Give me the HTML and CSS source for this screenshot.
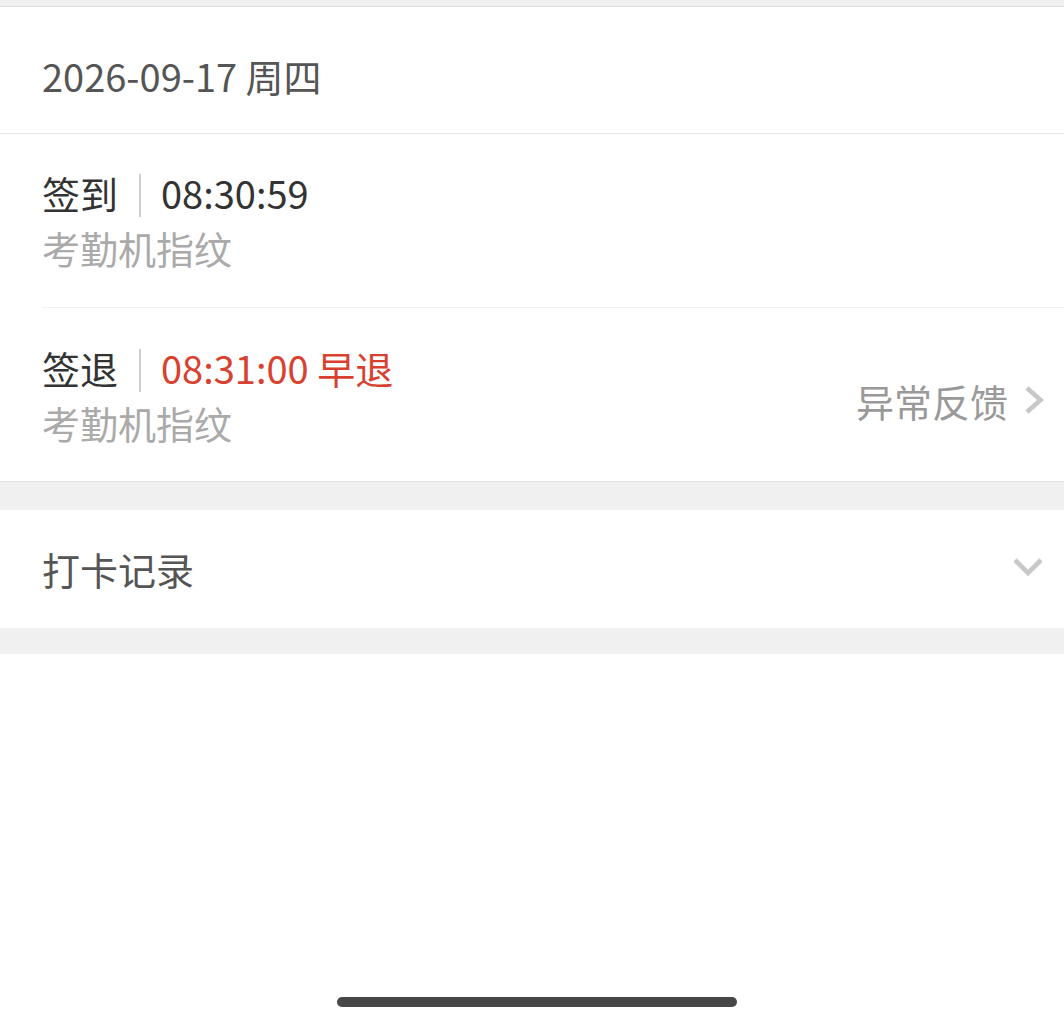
FILE: index.html
```html
<!DOCTYPE html>
<html lang="zh-CN">
<head>
<meta charset="utf-8">
<title>考勤详情</title>
<link rel="stylesheet" href="styles.css">
</head>
<body>
<div class="topband"></div>
<section class="card">
  <div class="date-row">2026-09-17 周四</div>
  <div class="record inset">
    <div class="record-main">
      <div class="line1"><span class="label">签到</span><span class="sep"></span><span class="time">08:30:59</span></div>
      <div class="line2">考勤机指纹</div>
    </div>
  </div>
  <div class="record">
    <div class="record-main">
      <div class="line1"><span class="label">签退</span><span class="sep"></span><span class="time late">08:31:00 早退</span></div>
      <div class="line2">考勤机指纹</div>
    </div>
    <div class="feedback">
      <span>异常反馈</span>
      <svg class="chev-right" width="20" height="30" viewBox="0 0 20 30"><path d="M3 3 L16.5 15 L3 27" fill="none" stroke="#c8c8c8" stroke-width="4.6"/></svg>
    </div>
  </div>
</section>
<div class="gap"></div>
<section class="card-plain">
  <div class="log-row">
    <span>打卡记录</span>
    <svg class="chev-down" width="32" height="20" viewBox="0 0 32 20"><path d="M3 3 L16 16 L29 3" fill="none" stroke="#c8c8c8" stroke-width="4.6"/></svg>
  </div>
</section>
<div class="gap bottom"></div>
<div class="home-indicator"></div>
</body>
</html>
```
FILE: styles.css
```css
html, body {
  margin: 0;
  padding: 0;
  background: #ffffff;
}
body {
  font-family: "Noto Sans CJK SC", "Noto Sans", sans-serif;
  font-size: 38px;
  line-height: 55px;
  min-height: 1027px;
}
.topband {
  height: 6px;
  background: #f0f0f0;
  border-bottom: 1px solid #dedede;
}
.card {
  background: #fff;
  border-bottom: 1px solid #e2e2e2;
}
.date-row {
  padding: 41px 42px 30px;
  color: #555555;
  border-bottom: 1px solid #e8e8e8;
}
.record {
  display: flex;
  align-items: center;
  padding: 32px 20px 31px 42px;
}
.record.inset {
  padding: 31px 20px 0 0;
  margin-left: 42px;
  border-bottom: 1px solid #f1f1f1;
}
.record.inset .record-main {
  padding-bottom: 32px;
}
.record-main {
  flex: 1;
}
.line1 {
  display: flex;
  align-items: center;
  color: #333333;
}
.sep {
  width: 2px;
  height: 43px;
  background: #cfcfcf;
  margin: 6px 20px 0 21px;
}
.time.late {
  color: #d8412f;
}
.line2 {
  color: #aaaaaa;
}
.feedback {
  display: flex;
  align-items: center;
  gap: 16px;
  color: #999999;
  margin-top: 10px;
}
.chev-right {
  display: block;
}
.gap {
  height: 28px;
  background: #f0f0f0;
}
.gap.bottom {
  height: 26px;
}
.log-row {
  display: flex;
  align-items: center;
  justify-content: space-between;
  padding: 31px 20px 32px 42px;
  color: #555555;
}
.chev-down {
  display: block;
  margin-top: -4px;
}
.home-indicator {
  position: fixed;
  left: 337px;
  bottom: 20px;
  width: 400px;
  height: 10px;
  border-radius: 5px;
  background: #474747;
}
```
